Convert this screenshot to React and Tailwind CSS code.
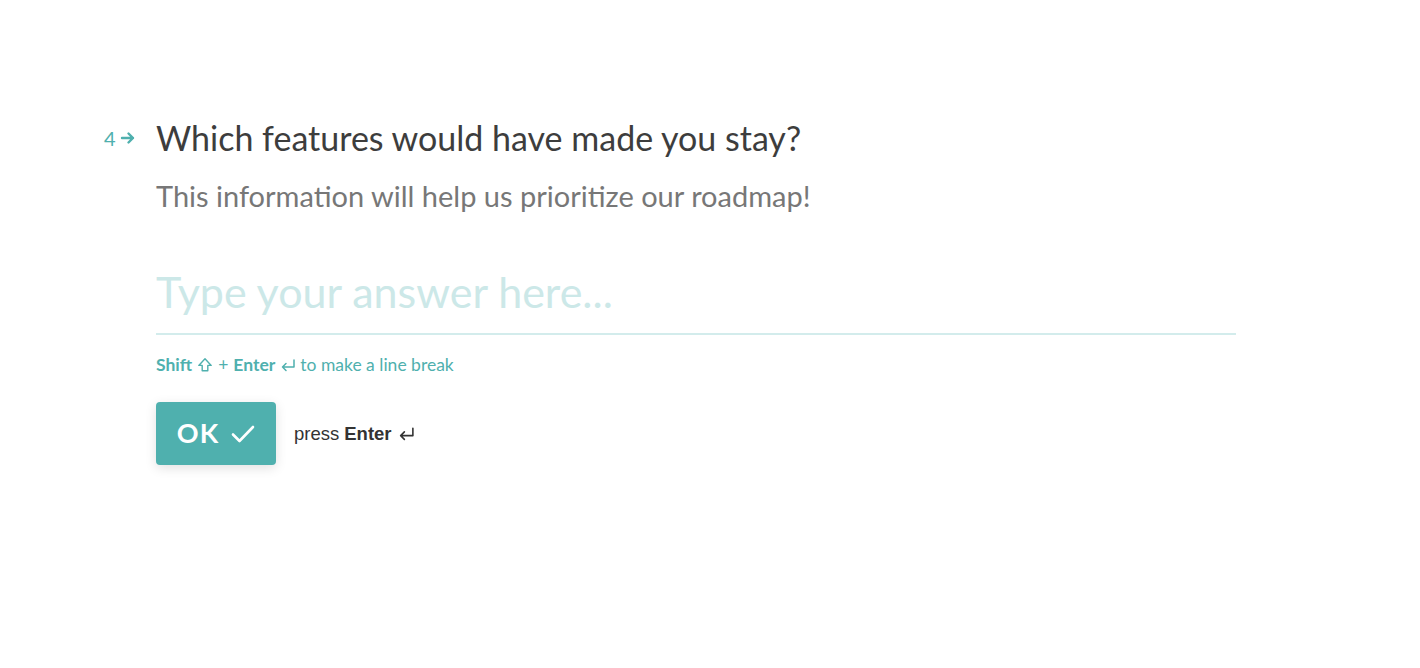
import { useState } from 'react';

const ShiftIcon = () => (
  <svg className="h-[16px] w-[16px]" viewBox="0 0 16 16" fill="none" stroke="currentColor" strokeWidth={1.4} strokeLinejoin="round">
    <path d="M8 1.8L1.8 8.4h3.4v5.4h5.6V8.4h3.4z" />
  </svg>
);

const EnterIcon = ({ className = 'h-[14px] w-[16px]' }) => (
  <svg className={className} viewBox="0 0 16 14" fill="none" stroke="currentColor" strokeWidth={1.5} strokeLinecap="round" strokeLinejoin="round">
    <path d="M14 2v7H2.5M6 5.5L2.5 9 6 12.5" />
  </svg>
);

export default function App() {
  const [answer, setAnswer] = useState('');

  return (
    <div className="min-h-screen w-full bg-white" style={{ fontFamily: 'Lato, sans-serif' }}>
      <div className="flex pt-[116px] pl-[104px]">
        {/* Question number */}
        <div className="flex h-[44px] w-[52px] items-center gap-[4px] text-[#4fb0ae]">
          <span className="text-[20px] leading-none">4</span>
          <svg className="h-[14px] w-[16px]" viewBox="0 0 16 14" fill="none" stroke="currentColor" strokeWidth={2.4} strokeLinecap="round" strokeLinejoin="round">
            <path d="M2 7h11M8.5 2.5L13 7l-4.5 4.5" />
          </svg>
        </div>

        <div className="flex w-[1080px] flex-col">
          <h1 className="text-[34px] leading-[44px] text-[#3d3d3d]">Which features would have made you stay?</h1>
          <p className="mt-[19px] text-[29px] leading-[34px] text-[#777]">This information will help us prioritize our roadmap!</p>

          <textarea
            rows={1}
            value={answer}
            onChange={e => setAnswer(e.target.value)}
            placeholder="Type your answer here..."
            className="mt-[52px] h-[70px] w-full resize-none border-b-2 border-[#d3ecec] bg-transparent pb-[6px] text-[43px] leading-[54px] text-[#4fb0ae] placeholder:text-[#cce8e8] outline-none"
          />

          {/* Hint */}
          <div className="mt-[20px] flex items-center text-[17.5px] leading-[20px] text-[#4fb0ae]">
            <span className="font-bold">Shift</span>
            <span className="ml-[5px]"><ShiftIcon /></span>
            <span className="ml-[5px]">+</span>
            <span className="ml-[5px] font-bold">Enter</span>
            <span className="ml-[5px]"><EnterIcon /></span>
            <span className="ml-[4px]">to make a line break</span>
          </div>

          {/* Submit row */}
          <div className="mt-[27px] flex items-center">
            <button className="flex h-[63px] w-[120px] items-center justify-center gap-[12px] rounded-[4px] bg-[#4fb0ae] text-white shadow-[0_3px_12px_rgba(0,0,0,0.12)]">
              <span className="text-[27px] font-bold tracking-[1px]">OK</span>
              <svg className="h-[22px] w-[24px]" viewBox="0 0 24 22" fill="none" stroke="currentColor" strokeWidth={2.6} strokeLinecap="round" strokeLinejoin="round">
                <path d="M2 11.5l6.5 6.5L22 4" />
              </svg>
            </button>
            <span className="ml-[18px] flex items-center text-[18.5px] text-[#333]" style={{ fontFamily: '"Liberation Sans", Arial, sans-serif' }}>
              press <b className="ml-[5px]">Enter</b>
              <span className="ml-[6px] text-[#333]"><EnterIcon className="h-[15px] w-[17px]" /></span>
            </span>
          </div>
        </div>
      </div>
    </div>
  );
}
